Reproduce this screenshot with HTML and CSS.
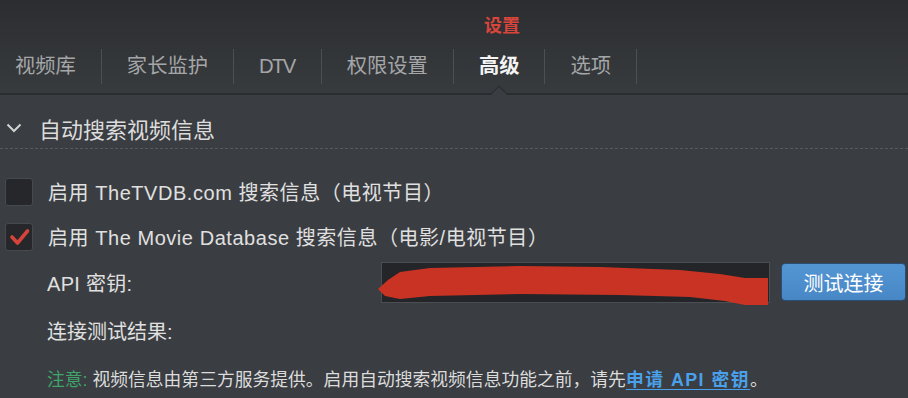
FILE: index.html
```html
<!DOCTYPE html>
<html lang="zh-CN">
<head>
<meta charset="utf-8">
<title>设置</title>
<link rel="stylesheet" href="styles.css">
</head>
<body>
<div class="window">
  <div class="top">
    <header class="titlebar"><span class="title">设置</span></header>
    <nav class="tabs">
      <span class="tab first">视频库</span>
      <span class="tab">家长监护</span>
      <span class="tab latin">DTV</span>
      <span class="tab">权限设置</span>
      <span class="tab active">高级</span>
      <span class="tab">选项</span>
    </nav>
  </div>
  <main class="content">
    <div class="section-head">
      <svg class="chevron" width="16" height="10" viewBox="0 0 16 10"><polyline points="1.5,1.5 8,8 14.5,1.5" fill="none" stroke="#d2d2d2" stroke-width="2"/></svg>
      <span class="section-title">自动搜索视频信息</span>
    </div>
    <div class="check-row">
      <span class="checkbox"></span>
      <span class="check-label">启用 TheTVDB.com 搜索信息（电视节目）</span>
    </div>
    <div class="check-row">
      <span class="checkbox">
        <svg width="28" height="28" viewBox="0 0 28 28"><polyline points="7,14 12.5,20 22.5,8" fill="none" stroke="#d4443a" stroke-width="3.6" stroke-linecap="round" stroke-linejoin="round"/></svg>
      </span>
      <span class="check-label">启用 The Movie Database 搜索信息（电影/电视节目）</span>
    </div>
    <div class="field-row">
      <span class="field-label">API 密钥:</span>
      <div class="input-wrap">
        <div class="input"></div>
        <svg class="scribble" width="394" height="46" viewBox="0 0 394 46"><polygon fill="#c93324" points="1,27 11,18 23,10 53,6 143,4 223,5 303,8 343,12 368,16 391,16 391,43 368,43 348,39 313,35 243,33 143,32 53,34 23,37 8,34"/></svg>
      </div>
      <button class="btn">测试连接</button>
    </div>
    <div class="result-row">连接测试结果:</div>
    <div class="note-row"><span class="note-key">注意:</span> 视频信息由第三方服务提供。启用自动搜索视频信息功能之前，请先<a class="link" href="#">申请 API 密钥</a>。</div>
  </main>
</div>
</body>
</html>
```
FILE: styles.css
```css
html, body {
  margin: 0;
  padding: 0;
}
body {
  background: #3a3d41;
  font-family: "Liberation Sans", "Noto Sans CJK SC", sans-serif;
  color: #dedede;
  width: 908px;
  height: 398px;
  overflow: hidden;
}
.window {
  width: 908px;
  height: 398px;
}
.top {
  background: linear-gradient(#2b2d30, #383b3e);
  border-bottom: 2px solid #2a2c2f;
}
.titlebar {
  height: 45px;
  display: flex;
  align-items: center;
  padding-left: 484px;
  box-sizing: border-box;
  padding-top: 3px;
}
.title {
  color: #d9453b;
  font-size: 18px;
  font-weight: 700;
}
.tabs {
  height: 48px;
  box-sizing: border-box;
  padding-top: 4px;
  display: flex;
  align-items: flex-start;
}
.tab {
  position: relative;
  height: 35px;
  line-height: 35px;
  padding: 0 25px;
  font-size: 20.3px;
  color: #a4a6a8;
  border-right: 1px solid #4c4f53;
}
.tab.first {
  padding-left: 15px;
}
.tab.latin {
  letter-spacing: -1.6px;
  padding-right: 26px;
}
.tab.active {
  color: #f4f4f4;
  font-weight: 700;
}
.tab.active::after {
  content: "";
  position: absolute;
  left: 50%;
  top: 39px;
  width: 11px;
  height: 11px;
  margin-left: -6px;
  background: #3a3d41;
  border-top: 1px solid #2a2c2f;
  border-left: 1px solid #2a2c2f;
  transform: rotate(45deg);
}
.content {
  padding: 0;
}
.section-head {
  margin-top: 13px;
  height: 40px;
  display: flex;
  align-items: center;
  border-bottom: 1px dashed #56595d;
}
.chevron {
  margin-left: 6px;
  margin-right: 17px;
}
.section-title {
  font-size: 22px;
  color: #dcdcdc;
}
.check-row {
  height: 45px;
  display: flex;
  align-items: center;
  padding-left: 5px;
}
.section-head + .check-row {
  margin-top: 20px;
}
.checkbox {
  width: 28px;
  height: 28px;
  box-sizing: border-box;
  background: #25272b;
  border: 1px solid #46494d;
  border-radius: 3px;
  margin-right: 15px;
  display: flex;
}
.checkbox svg {
  margin: -1px;
}
.check-label {
  font-size: 20px;
  letter-spacing: 0.55px;
  color: #e0e0e0;
}
.field-row {
  height: 46px;
  display: flex;
  align-items: center;
  padding-left: 47px;
}
.field-label {
  font-size: 20px;
  letter-spacing: 0.3px;
  width: 334px;
  color: #e0e0e0;
}
.input-wrap {
  position: relative;
  width: 389px;
  height: 41px;
}
.input {
  width: 389px;
  height: 41px;
  box-sizing: border-box;
  background: #232528;
  border: 1px solid #4b4e52;
}
.scribble {
  position: absolute;
  left: -4px;
  top: 0;
}
.btn {
  margin-left: 11px;
  width: 125px;
  height: 38px;
  border: 1px solid #2b4f74;
  border-radius: 4px;
  background: linear-gradient(#5395d3, #4887c5);
  color: #ffffff;
  font-family: inherit;
  font-size: 20px;
  padding: 0;
}
.result-row {
  height: 50px;
  display: flex;
  align-items: center;
  padding-left: 47px;
  font-size: 20px;
  color: #e0e0e0;
}
.note-row {
  height: 50px;
  line-height: 50px;
  padding-left: 47px;
  font-size: 17.8px;
  color: #dcdcdc;
  white-space: nowrap;
}
.note-key {
  color: #3fa56b;
}
.link {
  color: #4aa0ea;
  font-weight: 700;
  letter-spacing: 1.5px;
  text-decoration: underline;
  text-underline-offset: 3px;
}
```
